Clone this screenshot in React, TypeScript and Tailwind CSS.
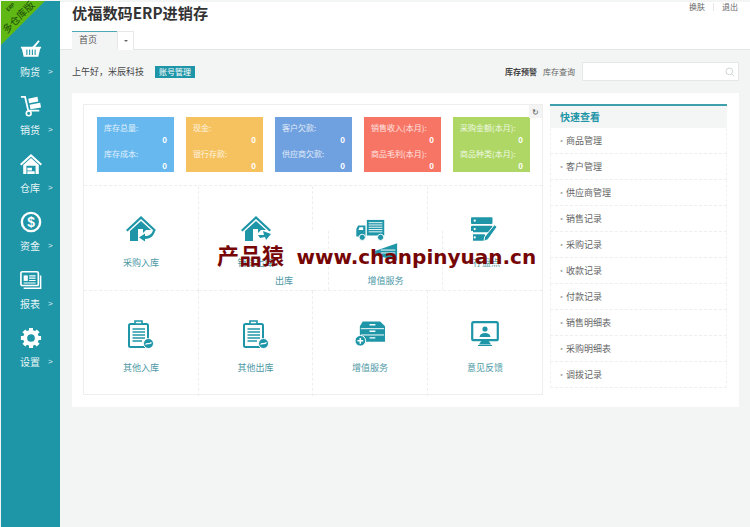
import React from "react";

const teal = "#1f96a8";

type IconProps = { className?: string };

function Basket({ className }: IconProps) {
  return (
    <svg viewBox="0 0 24 20" className={className} fill="currentColor">
      <path d="M13 9 L20 1 L21.5 2 L16 9 Z" />
      <path d="M1 8 H23 V10 H22 L20 19 H4 L2 10 H1 Z" />
      <path d="M7.5 11 V17 M10.5 11 V17 M13.5 11 V17 M16.5 11 V17" stroke={teal} strokeWidth="1.2" />
    </svg>
  );
}

function Trolley({ className }: IconProps) {
  return (
    <svg viewBox="0 0 24 24" className={className} fill="currentColor">
      <path d="M1 2 H5.5 L9 17 H21" fill="none" stroke="currentColor" strokeWidth="2" />
      <circle cx="9.5" cy="20" r="2.6" fill="none" stroke="currentColor" strokeWidth="1.8" />
      <path d="M9 4 L19 2 L20 7 L10 9 Z M10.5 10.5 L22 8.5 L23 13.5 L11.5 15.5 Z" />
    </svg>
  );
}

function Warehouse({ className }: IconProps) {
  return (
    <svg viewBox="0 0 24 24" className={className} fill="currentColor">
      <path d="M12 1 L24 12 L22.5 13.5 L12 4 L1.5 13.5 L0 12 Z" />
      <path d="M3.5 13 L12 5.5 L20.5 13 V23 H17 V14 H7 V23 H3.5 Z" />
      <path d="M8 16 H13 V19 H8 Z M8 20 H16 V23 H8 Z" />
    </svg>
  );
}

function Coin({ className }: IconProps) {
  return (
    <svg viewBox="0 0 24 24" className={className} fill="none">
      <circle cx="12" cy="12" r="10" stroke="currentColor" strokeWidth="2.6" />
      <text x="12" y="17.5" textAnchor="middle" fontSize="15" fontWeight="700" fill="currentColor" fontFamily="Liberation Sans, sans-serif">
        $
      </text>
    </svg>
  );
}

function Report({ className }: IconProps) {
  return (
    <svg viewBox="0 0 24 24" className={className} fill="none" stroke="currentColor">
      <rect x="1" y="3" width="19" height="15" rx="1.5" strokeWidth="1.8" />
      <path d="M4 21 H22.5 V7" strokeWidth="1.6" />
      <rect x="4" y="7" width="4.5" height="6" fill="currentColor" stroke="none" />
      <path d="M10 7.5 H17 M10 10 H17 M10 12.5 H17 M4 15.2 H17" strokeWidth="1.2" />
    </svg>
  );
}

function Gear({ className }: IconProps) {
  return (
    <svg viewBox="0 0 24 24" className={className} fill="none" stroke="currentColor">
      <circle cx="12" cy="12" r="6.4" strokeWidth="4.4" />
      <path
        d="M12 1 V5 M12 19 V23 M1 12 H5 M19 12 H23 M4.2 4.2 L7 7 M17 17 L19.8 19.8 M4.2 19.8 L7 17 M17 7 L19.8 4.2"
        strokeWidth="4.4"
      />
    </svg>
  );
}

function HouseIn({ className, flip }: IconProps & { flip?: boolean }) {
  return (
    <svg viewBox="0 0 30 26" className={className} fill="currentColor">
      <path d="M15 0 L30 14 L28.5 15.5 L15 3 L1.5 15.5 L0 14 Z" />
      <path d="M4 15 L15 5 L25 14 L20 14 L15 19 L15 25 H4 Z" />
      <path d="M12 13 H17 V25 H12 Z" fill="#fff" />
      {flip ? (
        <path d="M17 19 L23 19 L22 15 L30 18 L25 24 L24 21 L19 22 Z" />
      ) : (
        <path d="M29 15 C28 20 24 23 19 23 V25.5 L13 21.5 L19 17.5 V20 C23 20 26 18 27 14 Z" />
      )}
    </svg>
  );
}

function Truck({ className }: IconProps) {
  return (
    <svg viewBox="0 0 32 24" className={className} fill="currentColor">
      <path d="M12 1 H31 V18 H12 Z" />
      <path d="M14 4 H29 M14 6.5 H29 M14 9 H29 M14 11.5 H29 M14 14 H29" stroke="#fff" strokeWidth="1" />
      <path d="M2.5 7 H10.5 V19 H0.5 V11 Z" />
      <path d="M4 9 H8 V12 H2.8 Z" fill="#fff" />
      <circle cx="7" cy="20" r="3.4" stroke="#fff" />
      <circle cx="27" cy="20" r="3.4" stroke="#fff" />
    </svg>
  );
}

function ServerPen({ className }: IconProps) {
  return (
    <svg viewBox="0 0 30 26" className={className} fill="currentColor">
      <rect x="0" y="0" width="23" height="7" rx="1" />
      <rect x="0" y="9" width="23" height="7" rx="1" />
      <rect x="0" y="18" width="15" height="7" rx="1" />
      <circle cx="4" cy="3.5" r="1.2" fill="#fff" />
      <circle cx="4" cy="12.5" r="1.2" fill="#fff" />
      <circle cx="4" cy="21.5" r="1.2" fill="#fff" />
      <path d="M25 8 L28 10 L18 24 L14 25.5 L14.5 21 Z" stroke="#fff" strokeWidth="1" />
    </svg>
  );
}

function Clipboard({ className }: IconProps) {
  return (
    <svg viewBox="0 0 26 30" className={className} fill="none" stroke="currentColor">
      <rect x="1" y="5" width="19" height="23" rx="1.5" strokeWidth="2" />
      <path d="M7 5 V2 H14 V5 Z" fill="#fff" strokeWidth="1.6" />
      <path d="M4.5 10 H17 M4.5 13 H17 M4.5 16 H17 M4.5 19 H17 M4.5 22 H14" strokeWidth="1.3" />
      <circle cx="20.5" cy="24.5" r="5" fill="currentColor" stroke="#fff" strokeWidth="1" />
      <path d="M17.5 25.5 C19 23.5 21 26 23.5 23.5" stroke="#fff" strokeWidth="1.2" />
    </svg>
  );
}

function Drawer({ className }: IconProps) {
  return (
    <svg viewBox="0 0 32 26" className={className} fill="currentColor">
      <path d="M8 0 H26 L31 5 V21 H5 V5 Z" />
      <path d="M6 7.5 H30 M6 14 H30" stroke="#fff" strokeWidth="1" />
      <path d="M15 10.2 H21 M15 17 H21 M15 3.5 H21" stroke="#fff" strokeWidth="1.5" />
      <circle cx="5.5" cy="20" r="5.5" stroke="#fff" />
      <path d="M2.5 20 H8.5 M5.5 17 V23" stroke="#fff" strokeWidth="1.6" />
    </svg>
  );
}

function Monitor({ className }: IconProps) {
  return (
    <svg viewBox="0 0 28 26" className={className} fill="none" stroke="currentColor">
      <rect x="1.2" y="1.2" width="25.6" height="18" rx="1.5" strokeWidth="2.2" />
      <path d="M9 23 H19 L17 20 H11 Z M7 24.5 H21" fill="currentColor" strokeWidth="1.2" />
      <circle cx="14" cy="8" r="2.6" fill="currentColor" stroke="none" />
      <path d="M8.5 16 C9 13 11 12 14 12 C17 12 19 13 19.5 16 Z" fill="currentColor" stroke="none" />
    </svg>
  );
}

const nav = [
  { label: "购货", Icon: Basket, size: "w-[22px] h-[19px]" },
  { label: "销货", Icon: Trolley, size: "w-[22px] h-[22px]" },
  { label: "仓库", Icon: Warehouse, size: "w-[22px] h-[22px]" },
  { label: "资金", Icon: Coin, size: "w-[22px] h-[22px]" },
  { label: "报表", Icon: Report, size: "w-[22px] h-[22px]" },
  { label: "设置", Icon: Gear, size: "w-[22px] h-[22px]" },
];

const stats = [
  { bg: "bg-[#66b8ee]", a: "库存总量:", b: "库存成本:" },
  { bg: "bg-[#f6c25f]", a: "现金:", b: "银行存款:" },
  { bg: "bg-[#6fa0df]", a: "客户欠款:", b: "供应商欠款:" },
  { bg: "bg-[#f77565]", a: "销售收入(本月):", b: "商品毛利(本月):" },
  { bg: "bg-[#aed765]", a: "采购金额(本月):", b: "商品种类(本月):" },
];

const quick = ["商品管理", "客户管理", "供应商管理", "销售记录", "采购记录", "收款记录", "付款记录", "销售明细表", "采购明细表", "调拨记录"];

const tiles = [
  { label: "采购入库", icon: <HouseIn className="w-[30px] h-[26px]" /> },
  { label: "销货出库", icon: <HouseIn flip className="w-[30px] h-[26px]" /> },
  { label: "", icon: null },
  { label: "", icon: <ServerPen className="w-[28px] h-[25px]" /> },
  { label: "其他入库", icon: <Clipboard className="w-[26px] h-[30px]" /> },
  { label: "其他出库", icon: <Clipboard className="w-[26px] h-[30px]" /> },
  { label: "增值服务", icon: <Drawer className="w-[31px] h-[26px]" /> },
  { label: "意见反馈", icon: <Monitor className="w-[28px] h-[26px]" /> },
];

export default function App() {
  return (
    <div
      className="relative w-[750px] h-[527px] overflow-hidden flex bg-[#f3f4f4] text-[10px] text-[#555]"
      style={{ fontFamily: '"Noto Sans CJK SC", "Liberation Sans", sans-serif' }}
    >
      {/* sidebar */}
      <aside className="relative w-[59px] ml-px mt-px shrink-0 bg-[#1f96a8] text-white flex flex-col items-center pt-[36px] gap-[16px]">
        {nav.map(({ label, Icon, size }) => (
          <div key={label} className="w-full flex flex-col items-center">
            <div className="flex items-center justify-center h-[22px]">
              <Icon className={size} />
            </div>
            <div className="relative mt-[5px] h-[15px] w-full pr-[1px] text-center text-[10px] leading-[15px] text-[#e8f5f7]">
              {label}
              <span className="absolute left-[47px] top-0 text-[8px]" style={{ fontFamily: '"Liberation Sans", sans-serif' }}>
                &gt;
              </span>
            </div>
          </div>
        ))}
        <div className="absolute left-0 top-0 w-[44px] h-[44px] bg-[#5fb814] [clip-path:polygon(0_0,100%_0,0_100%)]" />
        <span className="absolute left-[-3px] top-[11px] w-[40px] text-center -rotate-45 text-[10px] leading-none text-[#1a4a08] whitespace-nowrap">多仓库版</span>
        <span className="absolute left-[4px] top-[3px] -rotate-45 text-[5px] leading-none text-[#1a4a08] font-bold">ERP</span>
      </aside>

      <div className="flex-1 min-w-0 flex flex-col">
        {/* header */}
        <header className="relative h-[48px] mt-[2px] shrink-0 bg-white border-b border-[#e3e5e5]">
          <h1 className="absolute left-[12px] top-[-1px] text-[15.2px] leading-[22px] font-bold text-[#333]">优福数码ERP进销存</h1>
          <div className="absolute right-[12px] top-0 flex items-center gap-[8px] text-[8px] leading-[10px] text-[#666]">
            <span>换肤</span>
            <span className="w-px h-[8px] bg-[#e6e6e6]" />
            <span>退出</span>
          </div>
          <div className="absolute left-[12px] bottom-[-1px] flex items-end">
            <div className="w-[45px] h-[19px] bg-[#f3f4f4] border-t border-[#4fa8b5] pl-[7px] text-[9px] leading-[16px]">首页</div>
            <div className="w-[17px] h-[19px] bg-white border border-b-0 border-[#e8e8e8] flex items-center justify-center">
              <span className="w-0 h-0 border-x-[2px] border-x-transparent border-t-[2px] border-t-[#666]" />
            </div>
          </div>
        </header>

        {/* greeting row */}
        <div className="h-[43px] shrink-0 flex items-center pl-[12px] pr-[11px]">
          <span className="text-[9px] text-[#444]">上午好，米辰科技</span>
          <span className="ml-[11px] h-[12px] w-[40px] bg-[#1f96a8] text-white text-[8px] leading-[12px] text-center">账号管理</span>
          <span className="ml-auto text-[8px] font-bold text-[#444]">库存预警</span>
          <span className="ml-[6px] text-[8px] text-[#666]">库存查询</span>
          <div className="ml-[7px] w-[157px] h-[19px] bg-white border border-[#e6e8e8] flex items-center justify-end pr-[3px]">
            <svg viewBox="0 0 12 12" className="w-[10px] h-[10px] text-[#c5ccce]" fill="none" stroke="currentColor" strokeWidth="1">
              <circle cx="5.2" cy="5.2" r="4" />
              <path d="M8.2 8.2 L11 11" />
            </svg>
          </div>
        </div>

        {/* main card */}
        <main className="ml-[12px] w-[667px] h-[314px] bg-white flex gap-[7px] pl-[11px] pt-[11px]">
          <section className="relative w-[460px] h-[291px] border border-[#eeeeee]">
            <div className="absolute right-0 top-0 w-[13px] h-[13px] bg-[#f4f4f4] flex items-center justify-center text-[8px] leading-none text-[#555]">↻</div>
            <div className="h-[80px] flex gap-[12px] pl-[13px] pt-[12px]">
              {stats.map((s) => (
                <div key={s.a} className={`w-[77px] h-[55px] ${s.bg} text-white/80 px-[7px] pt-[5px] text-[8px] leading-[12px]`}>
                  <div className="whitespace-nowrap">{s.a}</div>
                  <div className="text-right font-bold text-white">0</div>
                  <div className="mt-[2px] whitespace-nowrap">{s.b}</div>
                  <div className="text-right font-bold text-white">0</div>
                </div>
              ))}
            </div>
            <div className="grid grid-cols-[115px_114px_115px_114px] grid-rows-[105px_105px] border-t border-dashed border-[#eeeeee]">
              {tiles.map((t, i) => (
                <div
                  key={i}
                  className={`flex flex-col items-center pt-[28px] text-[#1f96a8] ${i % 4 !== 3 ? "border-r border-dashed border-[#eeeeee]" : ""} ${i < 4 ? "border-b border-dashed border-[#eeeeee]" : ""}`}
                >
                  <div className="h-[30px] flex items-center justify-center">{t.icon}</div>
                  <div className="mt-[13px] text-[9px] leading-[12px] text-[#4d98a5]">{t.label}</div>
                </div>
              ))}
            </div>
          </section>

          <section className="w-[177px]">
            <div className="h-[24px] bg-[#f4f5f5] border-t-2 border-[#3f9fad] pl-[10px] text-[10px] leading-[21px] font-bold text-[#1f96a8]">快速查看</div>
            {quick.map((q) => (
              <div key={q} className="h-[26px] pt-[1px] border-b border-dashed border-[#eeeeee] flex items-center pl-[6px] text-[9px] text-[#666] border-x border-x-[#f2f2f2]">
                <span className="w-[9px] text-[#aaa]">·</span>
                {q}
              </div>
            ))}
          </section>
        </main>
      </div>

      {/* white patches left by the pasted watermark */}
      <div className="absolute left-[275px] top-[231px] w-[53px] h-[59px] bg-white flex items-end pb-[3px]">
        <span className="text-[9px] leading-[12px] text-[#4d98a5]">出库</span>
      </div>
      <div className="absolute left-[328px] top-[231px] w-[115px] h-[59px] bg-white border-x border-dashed border-[#eeeeee] flex flex-col items-center justify-end pb-[3px]">
        <svg viewBox="0 0 30 20" className="absolute left-[43px] top-[11px] w-[29px] h-[20px] text-[#1f96a8]" fill="currentColor">
          <path d="M3 9 L26 1 V19 L3 13 Z" />
          <path d="M9 8 H24 M9 11 H24" stroke="#fff" strokeWidth="1" />
        </svg>
        <span className="text-[9px] leading-[12px] text-[#4d98a5]">增值服务</span>
      </div>
      <div className="absolute left-[443px] top-[231px] w-[30px] h-[59px] bg-white" />
      <span className="absolute left-[473px] top-[257px] text-[9px] leading-[12px] text-[#4d98a5]">存盘点</span>
      <Truck className="absolute left-[355px] top-[219px] w-[31px] h-[22px] text-[#1f96a8]" />

      <div className="absolute left-[217px] top-[240px] flex items-baseline text-[#760606] font-bold whitespace-nowrap">
        <span className="text-[22px] leading-[28px] tracking-[0.5px]">产品猿</span>
        <span className="ml-[12px] text-[20px] leading-[28px]" style={{ fontFamily: '"DejaVu Sans", sans-serif' }}>
          www.chanpinyuan.cn
        </span>
      </div>
    </div>
  );
}
